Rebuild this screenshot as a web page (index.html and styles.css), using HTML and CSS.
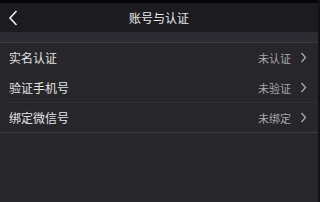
FILE: index.html
```html
<!DOCTYPE html>
<html>
<head>
<meta charset="utf-8">
<link rel="stylesheet" href="styles.css">
</head>
<body>
<div class="app">
  <div class="status"></div>
  <div class="header">
    <svg class="back" width="11" height="16" viewBox="0 0 11 16"><path d="M8.5 1 L2 8 L8.5 15" fill="none" stroke="#f0f0f0" stroke-width="1.6"/></svg>
    <div class="title">账号与认证</div>
  </div>
  <div class="gap"></div>
  <div class="list">
    <div class="row first"><span class="label">实名认证</span><span class="value">未认证</span><svg class="arrow" width="7" height="11" viewBox="0 0 7 11"><path d="M1.5 1 L5.5 5.5 L1.5 10" fill="none" stroke="#b0b0b0" stroke-width="1.2"/></svg></div>
    <div class="row"><span class="label">验证手机号</span><span class="value">未验证</span><svg class="arrow" width="7" height="11" viewBox="0 0 7 11"><path d="M1.5 1 L5.5 5.5 L1.5 10" fill="none" stroke="#b0b0b0" stroke-width="1.2"/></svg></div>
    <div class="row last"><span class="label">绑定微信号</span><span class="value">未绑定</span><svg class="arrow" width="7" height="11" viewBox="0 0 7 11"><path d="M1.5 1 L5.5 5.5 L1.5 10" fill="none" stroke="#b0b0b0" stroke-width="1.2"/></svg></div>
  </div>
  <div class="rest"></div>
</div>
</body>
</html>
```
FILE: styles.css
```css
* { box-sizing: border-box; }
html, body { margin: 0; padding: 0; }
body { width: 320px; height: 202px; background: #26262b; overflow: hidden; font-family: "Noto Sans CJK SC", "Noto Sans", sans-serif; }
.app { width: 320px; height: 202px; display: flex; flex-direction: column; border-right: 2px solid #121214; background: #26262b; }
.status { height: 3px; background: #050506; }
.header { height: 29px; background: #1c1c20; position: relative; display: flex; align-items: center; justify-content: center; }
.back { position: absolute; left: 8px; top: 7px; }
.title { color: #e8e8e8; font-size: 12px; line-height: 16px; }
.gap { height: 11px; background: #2b2b31; border-bottom: 1px solid #3a3a40; }
.list { display: flex; flex-direction: column; }
.row { height: 30px; display: flex; align-items: center; margin-left: 9px; padding-right: 11px; border-bottom: 1px solid #303036; }
.row.first { border-bottom-color: #28282d; }
.row.last { margin-left: 0; padding-left: 9px; border-bottom: 1px solid #3a3a40; }
.label { color: #e4e4e4; font-size: 12px; flex: 1; }
.value { color: #a8a8a8; font-size: 11px; margin-right: 9px; }
.arrow { display: block; }
.rest { flex: 1; }
```
